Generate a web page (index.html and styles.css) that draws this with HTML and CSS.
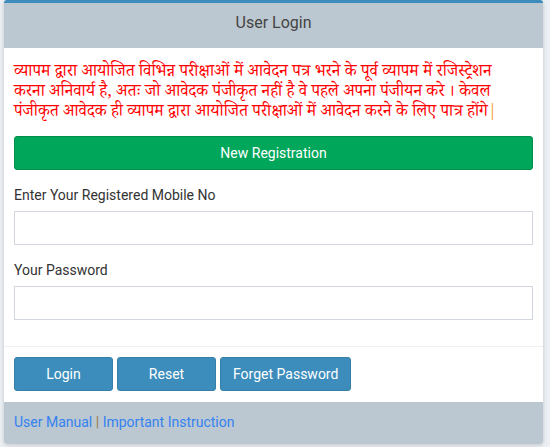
FILE: index.html
```html
<!DOCTYPE html>
<html lang="hi">
<head>
<meta charset="utf-8">
<title>User Login</title>
<link rel="stylesheet" href="styles.css">
</head>
<body>
<div class="box">
  <div class="box-header">User Login</div>
  <div class="box-body">
    <p class="notice">व्यापम द्वारा आयोजित विभिन्न  परीक्षाओं में आवेदन पत्र भरने के पूर्व व्यापम में रजिस्ट्रेशन<br>करना अनिवार्य है, अतः जो आवेदक पंजीकृत नहीं है वे पहले अपना  पंजीयन करे ।  केवल<br>पंजीकृत आवेदक ही व्यापम द्वारा आयोजित परीक्षाओं में आवेदन करने के लिए पात्र होंगे<span class="bar">|</span></p>
    <button class="btn btn-success" type="button">New Registration</button>
    <div class="form-group">
      <label class="label" for="mobile">Enter Your Registered Mobile No</label>
      <input class="input" id="mobile" type="text">
    </div>
    <div class="form-group">
      <label class="label" for="pwd">Your Password</label>
      <input class="input" id="pwd" type="password">
    </div>
  </div>
  <div class="box-actions">
    <button class="btn btn-primary btn-fixed" type="button">Login</button>
    <button class="btn btn-primary btn-fixed" type="button">Reset</button>
    <button class="btn btn-primary" type="button">Forget Password</button>
  </div>
  <div class="box-footer">
    <a href="#" class="link">User Manual</a> <span class="sep">|</span> <a href="#" class="link">Important Instruction</a>
  </div>
</div>
</body>
</html>
```
FILE: styles.css
```css
html, body {
  margin: 0;
  padding: 0;
}
body {
  background: #ecf0f5;
  font-family: Roboto, "Liberation Sans", Arial, sans-serif;
  font-size: 14px;
  color: #333;
  width: 550px;
  height: 447px;
  overflow: hidden;
}
.box {
  margin-left: 4px;
  width: 539px;
  background: #fff;
  border-top: 3px solid #3c8dbc;
  border-radius: 3px;
  box-shadow: 0 1px 4px rgba(0, 0, 0, 0.18);
  overflow: hidden;
}
.box-header {
  height: 45px;
  line-height: 40px;
  background: #bcc8d1;
  text-align: center;
  font-size: 16px;
  color: #444;
}
.box-body {
  padding: 15px 10px 1px;
  display: flex;
  flex-direction: column;
}
.notice {
  margin: 0;
  color: #ff0000;
  font-family: "Noto Serif Devanagari", "Noto Sans Devanagari", "Lohit Devanagari", "Noto Sans", serif;
  font-size: 16.7px;
  line-height: 20px;
  white-space: nowrap;
}
.bar {
  color: #f0a030;
}
.btn {
  height: 34px;
  border-radius: 3px;
  font-family: Roboto, "Liberation Sans", Arial, sans-serif;
  font-size: 14px;
  color: #fff;
  padding: 0 12px;
  cursor: pointer;
}
.btn-success {
  margin-top: 13px;
  width: 100%;
  background: #00a65a;
  border: 1px solid #008d4c;
}
.btn-primary {
  background: #3c8dbc;
  border: 1px solid #367fa9;
}
.btn-fixed {
  width: 99px;
}
.form-group {
  display: flex;
  flex-direction: column;
  margin-top: 15px;
}
.label {
  line-height: 20px;
  margin-bottom: 6px;
  color: #333;
}
.input {
  box-sizing: border-box;
  height: 34px;
  border: 1px solid #d2d6de;
  margin: 0 0 25px;
}
.form-group:first-of-type .input {
  margin-bottom: 0;
}
.box-actions {
  border-top: 1px solid #f0f0f0;
  padding: 10px 10px 11px;
  display: flex;
  gap: 4px;
}
.box-footer {
  background: #bcc8d1;
  padding: 10px;
  height: 22px;
  line-height: 20px;
  font-size: 14px;
}
.link {
  color: #3482f0;
  text-decoration: none;
}
.sep {
  color: #9a7b4f;
}
```
